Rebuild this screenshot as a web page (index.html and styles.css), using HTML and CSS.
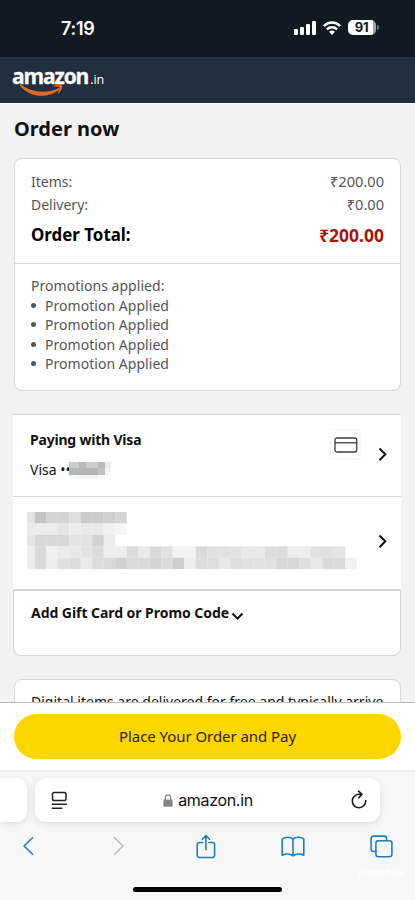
FILE: index.html
```html
<!DOCTYPE html>
<html lang="en">
<head>
<meta charset="utf-8">
<title>Order now</title>
<link rel="stylesheet" href="styles.css">
</head>
<body>
<div class="screen">
  <header class="status">
    <span class="time">7:19</span>
    <div class="status-icons">
      <svg class="signal" width="22" height="14" viewBox="0 0 22 14" fill="#fff"><rect x="0" y="8" width="4" height="6" rx="1"/><rect x="6" y="6" width="4" height="8" rx="1"/><rect x="12" y="3" width="4" height="11" rx="1"/><rect x="18" y="0" width="4" height="14" rx="1"/></svg>
      <svg class="wifi" width="18" height="14" viewBox="0 0 18 14" fill="none" stroke="#fff" stroke-width="2.5"><path d="M.9 5.1C5.4.4 12.6.4 17.1 5.1M3.9 8.4c2.9-2.8 7.3-2.8 10.2 0"/><path d="M6 10.700c1.700-1.500 4.300-1.500 6 0l-3 3.200z" fill="#fff" stroke="none"/></svg>
      <div class="battery"><span>91</span></div><i class="battery-tip"></i>
    </div>
  </header>
  <div class="brand">
    <span class="brand-name">amazon</span><span class="brand-tld">.in</span>
    <svg class="smile" width="44" height="13" viewBox="0 0 44 13" fill="#e8681e"><path d="M.5.3C11 8.800 28 9.800 38.500 3.900l.8 1.700C29 14.800 10 14 .2 2-.2 1 0 0 .500.300z"/><path d="M33.800 2.100C36 0 40.500-.4 42 .8c.8 1.800-.7 6.200-3.200 8.300-.7.500-1 .2-.7-.5.8-1.900 1.800-4.600 1.200-5.600-.7-.8-3.600-.6-5.100-.3-.7.100-.8-.2-.4-.6z"/></svg>
  </div>

  <main class="page">
    <h1>Order now</h1>
    <section class="card summary">
      <div class="totals">
        <div class="row"><span>Items:</span><span class="amount">₹200.00</span></div>
        <div class="row"><span>Delivery:</span><span class="amount">₹0.00</span></div>
        <div class="row grand"><span>Order Total:</span><span class="price">₹200.00</span></div>
      </div>
      <div class="promos">
        <p>Promotions applied:</p>
        <ul><li>Promotion Applied</li><li>Promotion Applied</li><li>Promotion Applied</li><li>Promotion Applied</li></ul>
      </div>
    </section>

    <section class="options">
      <div class="option pay">
        <div class="pay-text">
          <h2>Paying with Visa</h2>
          <div class="visa"><span>Visa ••</span><svg id="card-mosaic" class="mosaic-small" width="44" height="20"></svg></div>
        </div>
        <div class="card-icon"><svg width="24" height="16" viewBox="0 0 24 16" fill="none" stroke="#393944" stroke-width="1.3"><rect x="1" y="1" width="21.700" height="14" rx="2"/><path d="M1 5.800h21.700"/></svg></div>
        <svg class="chev" width="10" height="15" viewBox="0 0 10 15"><path d="M1.500 1.500 7.300 7.300 1.500 13.200"/></svg>
      </div>
      <div class="option address">
        <svg id="address-mosaic" width="331" height="58"></svg>
        <svg class="chev" width="10" height="15" viewBox="0 0 10 15"><path d="M1.500 1.500 7.300 7.300 1.500 13.200"/></svg>
      </div>
      <div class="gift"><h2>Add Gift Card or Promo Code</h2><svg class="down" width="13" height="9" viewBox="0 0 13 9"><path d="M1.500 1.500 6.500 6.600 11.500 1.500"/></svg></div>
    </section>

    <section class="card notice"><p>Digital items are delivered for free and typically arrive</p></section>
  </main>

  <div class="buy"><button type="button">Place Your Order and Pay</button></div>

  <footer class="browser">
    <div class="tabs">
      <div class="prev-tab"></div>
      <div class="address-bar">
        <svg width="17" height="19" viewBox="0 0 17 19" fill="none" stroke="#222" stroke-width="1.500" stroke-linecap="round"><rect x="1.500" y="1.500" width="13.500" height="8" rx="1.800"/><path d="M1.300 13.300h14M1.300 17.300h9.500"/></svg>
        <div class="url"><svg width="10" height="13" viewBox="0 0 10 13"><path d="M2.300 6V3.600a2.700 2.700 0 0 1 5.400 0V6" fill="none" stroke="#858589" stroke-width="1.300"/><rect x=".4" y="5.500" width="9.200" height="7.200" rx="1.200" fill="#858589"/></svg><span>amazon.in</span></div>
        <svg class="reload" width="16" height="19" viewBox="0 0 16 19" fill="none" stroke="#1c1c1c" stroke-width="1.600" stroke-linecap="round" stroke-linejoin="round"><path d="M14.700 10.500A6.700 6.700 0 1 1 9 4.400H11M7.500 1.200 11 4.400 7.800 7.800"/></svg>
      </div>
    </div>
    <nav class="tools">
      <svg width="12" height="20" viewBox="0 0 12 20"><path d="M10.500 1.700 2 10l8.500 8.300"/></svg>
      <svg class="off" width="12" height="20" viewBox="0 0 12 20"><path d="M1.500 1.700 10 10l-8.500 8.300"/></svg>
      <svg width="20" height="25" viewBox="0 0 20 25"><path d="M6.800 8.500H3.500a2.300 2.300 0 0 0-2.300 2.300v10.400a2.300 2.300 0 0 0 2.300 2.300h12.800a2.300 2.300 0 0 0 2.300-2.300V10.800a2.300 2.300 0 0 0-2.300-2.300H13M9.900 15.700V1.700M6.300 5.200 9.900 1.500l3.600 3.700"/></svg>
      <svg width="24" height="21" viewBox="0 0 24 21"><path d="M12 3.200C9.800.8 4.500.5 1.200 2.900v16.300c3.300-1.600 8-1.600 10.800.8 2.800-2.400 7.500-2.400 10.800-.8V2.900C19.500.5 14.200.8 12 3.200zM12 3.200V20"/></svg>
      <svg width="23" height="23" viewBox="0 0 23 23"><path d="M5.800 16.500H3.600A2.500 2.500 0 0 1 1.100 14V3.600a2.500 2.500 0 0 1 2.500-2.500h10.500a2.500 2.500 0 0 1 2.500 2.500v2"/><rect x="5.900" y="5.700" width="16" height="16" rx="2.500"/></svg>
    </nav>
    <span class="watermark">uswebtlk</span>
    <div class="home-bar"></div>
  </footer>
</div>
<script src="mosaic.js"></script>
</body>
</html>
```
FILE: styles.css
```css
* { box-sizing: border-box; }
body { margin: 0; font-family: "Noto Sans", sans-serif; color: #111; }
h1, h2, p, ul { margin: 0; padding: 0; }
svg { display: block; flex: none; }
.screen { width: 415px; height: 900px; overflow: hidden; display: flex; flex-direction: column; background: #f2f2f2; }
.status { height: 57px; flex: none; background: #111923; display: flex; justify-content: space-between; align-items: center; padding: 0 36.500px 2px 61px; color: #fff; }
.time { font: 600 18px/20px Inter, sans-serif; letter-spacing: -.25px; padding-top: 2px; }
.status-icons { display: flex; align-items: center; }
.wifi { margin-left: 7px; }
.battery { width: 28px; height: 15px; margin-left: 7px; border-radius: 5px; background: linear-gradient(90deg, #fff 90%, #a0a3a7 90%); color: #111923; text-align: center; font: 700 13px/15px Inter, sans-serif; letter-spacing: -.3px; }
.battery-tip { width: 2px; height: 5px; margin-left: 1px; border-radius: 0 2px 2px 0; background: #737980; }
.brand { position: relative; height: 46px; flex: none; background: #212f40; color: #fff; padding: 7px 0 0 12px; display: flex; align-items: baseline; line-height: 24px; }
.brand-name { font: 700 21px/24px "Open Sans", sans-serif; letter-spacing: -1.150px; -webkit-text-stroke: .3px #fff; }
.brand-tld { font: 400 12.500px/24px "Open Sans", sans-serif; margin-left: 2px; }
.smile { position: absolute; left: 20px; top: 27px; }
.page { height: 599px; flex: none; overflow: hidden; border-top: 1px solid #fff; padding: 10px 14px 0; }
h1 { font-size: 20px; line-height: 30px; font-weight: 700; }
.card { background: #fff; border: 1px solid #d9d9d9; border-radius: 8px; }
.summary { margin-top: 14px; height: 233px; color: #555; font-size: 14px; }
.totals { height: 105px; border-bottom: 1px solid #d9d9d9; padding: 11px 16px 0; }
.row { display: flex; justify-content: space-between; line-height: 23px; }
.amount { font-size: 14.600px; }
.grand { color: #000; font-size: 16.900px; font-weight: 700; line-height: 38px; }
.price { color: #a81608; font-size: 17.500px; }
.promos { padding: 12px 16px 0; line-height: 19.500px; letter-spacing: .04px; }
.promos ul { list-style: none; }
.promos li { display: flex; align-items: center; }
.promos li::before { content: ""; width: 5px; height: 5px; margin-right: 9px; border-radius: 50%; background: #555; }
.options { margin: 23px 0 0 -1px; width: 388px; height: 242px; }
.option { display: flex; background: #fff; border-top: 1px solid #d5d5d5; }
.pay { height: 82px; padding-left: 17px; }
.pay-text { width: 301px; padding-top: 14px; }
h2 { font-size: 14px; line-height: 22px; font-weight: 700; letter-spacing: -.05px; }
.pay h2 { letter-spacing: -.2px; }
.visa { display: flex; font-size: 14px; line-height: 22px; margin-top: 8px; }
.mosaic-small { margin: 3px 0 0 -2px; }
.card-icon { width: 31px; height: 31px; margin: 14px 1px 0 -1px; border: 1px solid #f4f4f6; border-radius: 4px; display: grid; place-items: center; }
.chev { margin: 32px 0 0 16px; }
.chev path, .down path { fill: none; stroke: #111; stroke-width: 2; }
.address { height: 93px; padding: 15px 0 0 14px; }
.address .chev { margin: 22px 0 0 20px; }
.gift { height: 67px; background: #fff; border: 1px solid #d5d5d5; border-top: 2px solid #d5d5d5; border-radius: 0 0 8px 8px; padding: 11px 0 0 17px; display: flex; }
.down { margin: 10px 0 0 2px; }
.notice { margin-top: 23px; height: 60px; padding: 11px 16px; font-size: 14px; line-height: 22px; white-space: nowrap; letter-spacing: .01px; }
.buy { height: 68px; flex: none; background: #fff; border-top: 1px solid #bcbcbc; padding: 11px 14px 0; }
.buy button { width: 387px; height: 45px; display: block; border: 0; border-radius: 23px; background: #ffd600; color: #2d2205; font: 400 15px/20px "Noto Sans", sans-serif; letter-spacing: -.06px; padding: 0 0 2px; }
.browser { position: relative; height: 130px; flex: none; background: #f7f7f7; border-top: 2px solid #eee; }
.tabs { display: flex; gap: 8px; padding-top: 6px; }
.prev-tab { width: 27px; height: 44px; background: #fff; border-radius: 0 11px 11px 0; box-shadow: 0 2px 9px #0000001a; }
.address-bar { width: 345px; height: 44px; background: #fff; border-radius: 11px; box-shadow: 0 2px 9px #0000001a; display: flex; align-items: center; justify-content: space-between; padding: 0 13px 0 16px; }
.url { display: flex; align-items: center; gap: 5px; margin-right: 3px; color: #111; font: 400 16px/20px Inter, sans-serif; letter-spacing: -.32px; }
.reload { margin-top: -2px; }
.tools { display: flex; align-items: center; height: 26px; margin: 11px 22px 0 22px; }
.tools svg { fill: none; stroke: #1c80bc; stroke-width: 1.600; stroke-linecap: round; stroke-linejoin: round; }
.tools svg + svg { margin-left: 65px; }
.tools .off { stroke: #bbbcbd; }
.tools svg.off { margin-left: 79px; }
.tools .off + svg { margin-left: 71px; }
.watermark { position: absolute; right: 11px; top: 94px; color: #fff; font: 11px/14px Inter, sans-serif; }
.home-bar { position: absolute; left: 133px; bottom: 8px; width: 149px; height: 5px; border-radius: 3px; background: #000; }
```
FILE: mosaic.js
```js
// Fills an SVG with a pixelated block of grey levels that hides private details.
function mosaic(id, xs, ys, rows) {
  const svg = document.getElementById(id);
  rows.forEach((row, r) => {
    row.split(" ").forEach((level, c) => {
      const rect = document.createElementNS("http://www.w3.org/2000/svg", "rect");
      rect.setAttribute("x", xs[c]);
      rect.setAttribute("y", ys[r]);
      rect.setAttribute("width", xs[c + 1] - xs[c] + 0.1);
      rect.setAttribute("height", ys[r + 1] - ys[r] + 0.1);
      rect.setAttribute("fill", "#" + level.repeat(3));
      svg.appendChild(rect);
    });
  });
}
const xs = [0];
for (let i = 0; i < 29; i++) xs.push(7.7 + i * 11.5);
mosaic("address-mosaic", xs, [0, 11.4, 22.8, 34.3, 45.7, 57], [
  "e2 c4 d4 d4 de ca ca cf d4",
  "ea ec ec e4 ec e8 e8 f0 f5",
  "e6 d7 d7 d7 e3 e3 d1 ec",
  "ee d9 ef ea e8 e3 db ed ed dc ea da e2 f3 f3 d9 e1 e1 e2 e8 e8 dc dc ec ec e0 e0 e4",
  "ec da ed e0 dc ea dc d8 d1 da da d4 da cc ed dc dd e8 dd e1 e1 e1 d7 d7 de e8 da da f2"
]);
mosaic("card-mosaic", [0, 10, 17, 29, 36, 42], [0, 6, 13, 17], [
  "cc b9 cc b9 eb",
  "b6 b4 b5 c2 f4",
  "f8 f4 f4 fa ff"
]);
```
